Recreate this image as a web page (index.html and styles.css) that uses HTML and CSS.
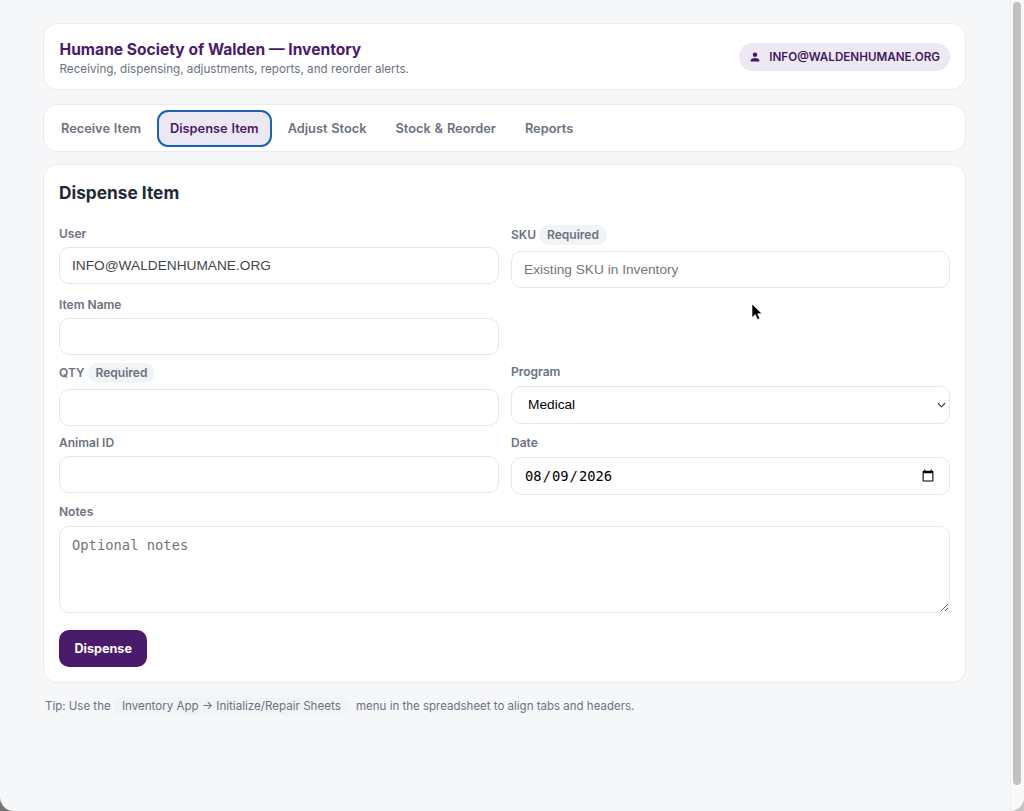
FILE: index.html
```html
<!DOCTYPE html>
<html lang="en">

<head>
    <meta charset="UTF-8">
    <meta name="viewport" content="width=device-width, initial-scale=1.0">
    <title>Humane Society of Walden — Inventory</title>
    <link rel="stylesheet" href="styles.css">
</head>

<body>
    <div class="window">
        <main class="page">
            <header class="card topbar">
                <div class="brand">
                    <h1>Humane Society of Walden — Inventory</h1>
                    <p class="subtitle">Receiving, dispensing, adjustments, reports, and reorder alerts.</p>
                </div>
                <div class="user-pill">
                    <svg class="user-icon" viewBox="0 0 24 24" width="12" height="12" aria-hidden="true">
                        <circle cx="12" cy="7.5" r="4.5" fill="currentColor"></circle>
                        <path d="M3.5 21v-2.5c0-3 5.5-4.5 8.500-4.500s8.500 1.500 8.500 4.500V21z" fill="currentColor"></path>
                    </svg>
                    <span>INFO@WALDENHUMANE.ORG</span>
                </div>
            </header>

            <nav class="card tabs">
                <button type="button" class="tab">Receive Item</button>
                <button type="button" class="tab active">Dispense Item</button>
                <button type="button" class="tab">Adjust Stock</button>
                <button type="button" class="tab">Stock &amp; Reorder</button>
                <button type="button" class="tab">Reports</button>
            </nav>

            <section class="card panel">
                <h2>Dispense Item</h2>
                <form class="form-grid">
                    <div class="field">
                        <label for="user">User</label>
                        <input id="user" type="text" class="form-control" value="INFO@WALDENHUMANE.ORG">
                    </div>
                    <div class="field">
                        <label for="sku" class="with-tag">SKU <span class="tag">Required</span></label>
                        <input id="sku" type="text" class="form-control" placeholder="Existing SKU in Inventory">
                    </div>
                    <div class="field">
                        <label for="itemName">Item Name</label>
                        <input id="itemName" type="text" class="form-control">
                    </div>
                    <div class="field"></div>
                    <div class="field">
                        <label for="qty" class="with-tag">QTY <span class="tag">Required</span></label>
                        <input id="qty" type="text" class="form-control">
                    </div>
                    <div class="field">
                        <label for="program">Program</label>
                        <div class="select-wrap">
                            <select id="program" class="form-control tall">
                                <option>Medical</option>
                            </select>
                            <svg class="chevron" viewBox="0 0 10 6" width="9" height="6" aria-hidden="true">
                                <path d="M1 1l4 4 4-4" fill="none" stroke="#222" stroke-width="1.2"></path>
                            </svg>
                        </div>
                    </div>
                    <div class="field">
                        <label for="animalId">Animal ID</label>
                        <input id="animalId" type="text" class="form-control">
                    </div>
                    <div class="field">
                        <label for="date">Date</label>
                        <input id="date" type="date" class="form-control tall date" value="2026-08-09">
                    </div>
                    <div class="field wide">
                        <label for="notes">Notes</label>
                        <textarea id="notes" class="form-control notes" placeholder="Optional notes"></textarea>
                    </div>
                </form>
                <button type="button" class="btn">Dispense</button>
            </section>

            <p class="tip">Tip: Use the <code>Inventory App → Initialize/Repair Sheets</code> menu in the spreadsheet to align tabs and headers.</p>
        </main>

        <div class="scrollbar">
            <div class="thumb"></div>
        </div>

        <svg class="cursor" viewBox="0 0 12 18" width="12" height="18" aria-hidden="true">
            <path d="M1 1v13.500l3.300-3 2.200 5 2.300-1-2.200-4.800h4.400z" fill="#000" stroke="#fff" stroke-width="0.6"></path>
        </svg>
    </div>
</body>

</html>
```

FILE: styles.css
```css
* {
    box-sizing: border-box;
}

html,
body {
    height: 100%;
}

body {
    margin: 0;
    overflow: hidden;
    background: linear-gradient(to right, #777777, #c4c4c4);
    font-family: Inter, "Liberation Sans", Arial, sans-serif;
    color: #1f2937;
}

.window {
    position: relative;
    display: flex;
    height: 811px;
    overflow: hidden;
    border-radius: 0 0 14px 14px;
    background-color: #f6f7f9;
}

.page {
    width: 1010px;
    flex: none;
    padding: 23px 44px 0 43px;
}

.scrollbar {
    width: 14px;
    flex: none;
    padding: 2px 3px 0;
    background-color: #f9f9f9;
    border-left: 1px solid #eeeeee;
}

.thumb {
    width: 8px;
    height: 783px;
    margin-left: -1px;
    border-radius: 4px;
    background-color: #c1c1c1;
}

.cursor {
    position: absolute;
    left: 751px;
    top: 303px;
}

.card {
    background-color: #ffffff;
    border: 1px solid #e9ebef;
    border-radius: 14px;
}

.topbar {
    display: flex;
    justify-content: space-between;
    align-items: center;
    height: 67px;
    padding: 0 15px 0 15.500px;
    margin-bottom: 14px;
}

.brand {
    padding-top: 4px;
}

h1 {
    margin: 0;
    font-size: 15.600px;
    line-height: 20px;
    font-weight: 700;
    color: #4a1a6b;
}

.subtitle {
    margin: 1px 0 0;
    font-size: 11.700px;
    line-height: 16px;
    color: #6b7280;
}

.user-pill {
    display: flex;
    align-items: center;
    gap: 8px;
    height: 28px;
    padding: 0 10px;
    border-radius: 14px;
    background-color: #ede8f2;
    color: #3f1a5e;
    font-size: 11.650px;
    font-weight: 600;
}

.user-icon {
    flex: none;
}

.tabs {
    display: flex;
    align-items: center;
    gap: 5px;
    height: 48px;
    padding: 0 5px;
    margin-bottom: 12px;
}

.tab {
    height: 35px;
    padding: 0 12px;
    border: none;
    border-radius: 10px;
    background: none;
    color: #6b7280;
    font-family: inherit;
    font-size: 12.800px;
    font-weight: 600;
    word-spacing: 0.6px;
}

.tab.active {
    background-color: #ece8f3;
    color: #4a1a6b;
    outline: 2px solid #1a62b5;
    outline-offset: -1px;
}

.panel {
    height: 519px;
    padding: 16px 15px;
}

h2 {
    margin: 0 0 20px;
    font-size: 17.300px;
    line-height: 24px;
    font-weight: 700;
    color: #1f2937;
}

.form-grid {
    display: grid;
    grid-template-columns: 440px 1fr;
    column-gap: 12px;
    row-gap: 8px;
}

.field {
    display: flex;
    flex-direction: column;
}

.wide {
    grid-column: 1 / -1;
}

label {
    display: block;
    padding-top: 1px;
    margin-bottom: 5px;
    font-size: 12px;
    line-height: 16px;
    font-weight: 600;
    color: #6b7280;
}

.with-tag {
    display: flex;
    align-items: center;
    gap: 3px;
    height: 20px;
    padding-top: 0;
    margin-bottom: 6px;
}

.tag {
    padding: 0 8px;
    border-radius: 10px;
    background-color: #f1f3f6;
    line-height: 20px;
}

.form-control {
    display: block;
    width: 100%;
    height: 37px;
    padding: 0 12px 1px;
    border: 1px solid #e5e7eb;
    border-radius: 10px;
    background-color: #ffffff;
    color: #444444;
    font-family: "Liberation Sans", Arial, sans-serif;
    font-size: 13.700px;
}

.form-control::placeholder {
    color: #757575;
}

.tall {
    height: 38px;
    margin-top: 1px;
}

.select-wrap {
    position: relative;
}

select.form-control {
    appearance: none;
    padding-left: 16px;
    color: #000000;
}

.chevron {
    position: absolute;
    right: 4px;
    top: 17px;
}

.date {
    font-family: "DejaVu Sans Mono", monospace;
    font-size: 13.800px;
    color: #000000;
    padding-left: 12px;
    padding-right: 12px;
}

.notes {
    height: 87px;
    margin-top: 1px;
    padding: 10px 12px;
    resize: vertical;
    font-family: "DejaVu Sans Mono", monospace;
    font-size: 13.800px;
}

.btn {
    display: block;
    height: 37px;
    margin-top: 17px;
    padding: 0 15.500px;
    border: none;
    border-radius: 10px;
    background-color: #4a1a6b;
    color: #ffffff;
    font-family: inherit;
    font-size: 12.600px;
    font-weight: 700;
}

.tip {
    margin: 14px 0 0 2px;
    font-size: 11.500px;
    line-height: 18px;
    color: #6b7280;
}

code {
    display: inline-block;
    margin: 0 4px 0 0;
    padding: 0 8px;
    border-radius: 6px;
    background-color: #f1f3f5;
    font-family: inherit;
    font-size: 11.600px;
}
```
